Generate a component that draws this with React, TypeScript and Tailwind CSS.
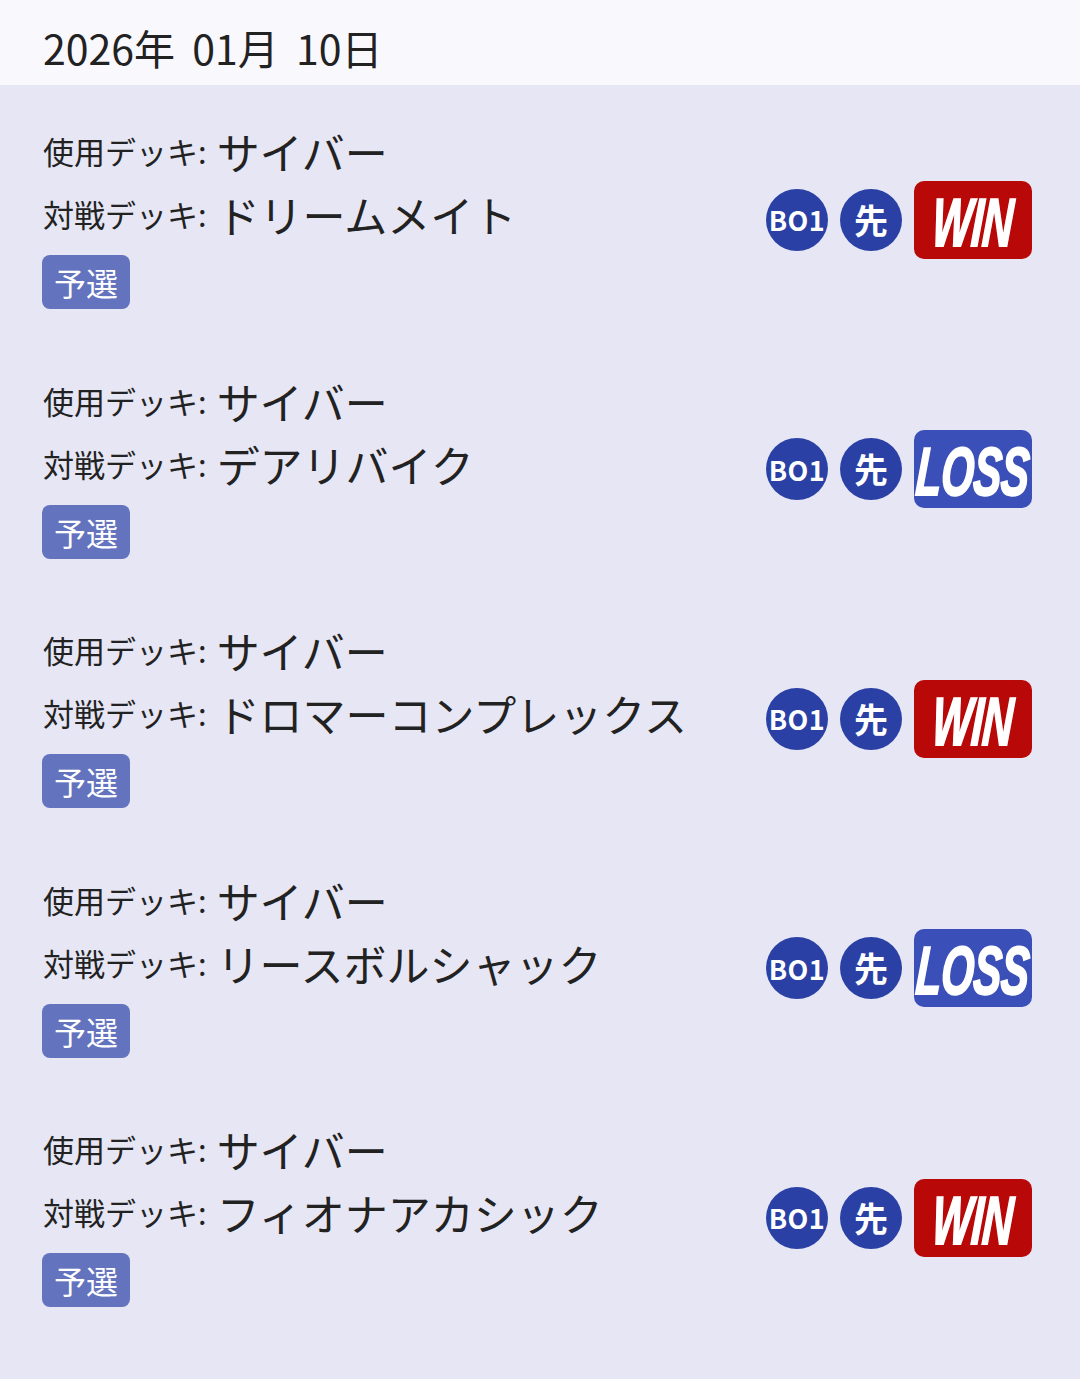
const matches = [
  { mine: "サイバー", opp: "ドリームメイト", result: "win" },
  { mine: "サイバー", opp: "デアリバイク", result: "loss" },
  { mine: "サイバー", opp: "ドロマーコンプレックス", result: "win" },
  { mine: "サイバー", opp: "リースボルシャック", result: "loss" },
  { mine: "サイバー", opp: "フィオナアカシック", result: "win" },
];

const jp = { fontFamily: '"Noto Sans CJK JP", "Noto Sans", sans-serif' };

function ResultBox({ result }: { result: string }) {
  const win = result === "win";
  return (
    <div
      className={`w-[118px] h-[78px] rounded-[10px] flex items-center justify-center overflow-hidden ${
        win ? "bg-[#b80808]" : "bg-[#3a4fb8]"
      }`}
    >
      <span
        className="text-white italic font-bold text-[68px] leading-none scale-x-[0.62] -skew-x-6 tracking-[-1px] mt-[4px] [-webkit-text-stroke:2px_white]"
        style={{ fontFamily: '"Liberation Sans", Arial, sans-serif' }}
      >
        {win ? "WIN" : "LOSS"}
      </span>
    </div>
  );
}

function MatchRow({ mine, opp, result }: { mine: string; opp: string; result: string }) {
  return (
    <div className="flex items-center justify-between pl-[43px] pr-[48px] pt-[35px] pb-[25.5px]">
      <div className="flex flex-col">
        <div className="flex items-center h-[63px] text-[#222]">
          <span className="text-[31px]">使用デッキ:</span>
          <span className="text-[43px] ml-[10px]">{mine}</span>
        </div>
        <div className="flex items-center h-[63px] text-[#222]">
          <span className="text-[31px]">対戦デッキ:</span>
          <span className="text-[43px] ml-[10px]">{opp}</span>
        </div>
        <div className="mt-[9px] -ml-[1px] w-[88px] h-[54px] rounded-[8px] bg-[#6373bd] flex items-center justify-center text-white text-[32px] leading-none">
          予選
        </div>
      </div>
      <div className="flex items-center gap-[12px] mt-[10px]">
        <div className="w-[62px] h-[62px] rounded-full bg-[#2a40a5] flex items-center justify-center text-white font-bold text-[27px] leading-none tracking-[0.5px]">
          BO1
        </div>
        <div className="w-[62px] h-[62px] rounded-full bg-[#2a40a5] flex items-center justify-center text-white font-bold text-[34px] leading-none">
          先
        </div>
        <ResultBox result={result} />
      </div>
    </div>
  );
}

export default function App() {
  return (
    <div className="min-h-[1379px] bg-[#e6e6f4]" style={jp}>
      <div className="h-[85px] bg-[#f9f8fd] flex items-center pl-[43px] pt-[10px]">
        <h1 className="text-[41px] text-[#222] leading-none [word-spacing:8px]">2026年 01月 10日</h1>
      </div>
      {matches.map((m, i) => (
        <MatchRow key={i} {...m} />
      ))}
    </div>
  );
}
